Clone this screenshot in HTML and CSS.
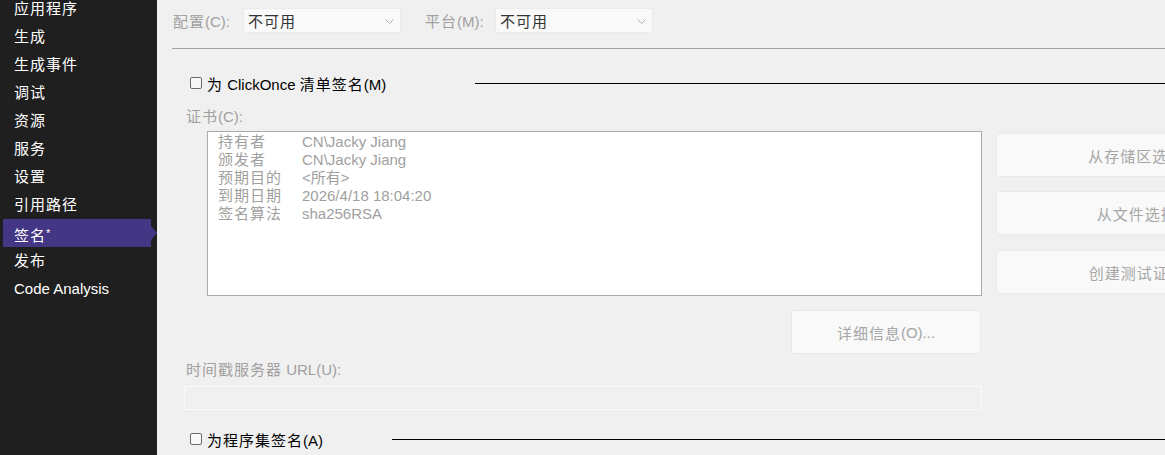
FILE: index.html
```html
<!DOCTYPE html>
<html lang="zh-CN">
<head>
<meta charset="utf-8">
<title>签名</title>
<link rel="stylesheet" href="styles.css">
</head>
<body>
<nav class="sidebar">
  <ul class="nav-list">
    <li class="nav-item zh">应用程序</li>
    <li class="nav-item zh">生成</li>
    <li class="nav-item zh">生成事件</li>
    <li class="nav-item zh">调试</li>
    <li class="nav-item zh">资源</li>
    <li class="nav-item zh">服务</li>
    <li class="nav-item zh">设置</li>
    <li class="nav-item zh">引用路径</li>
    <li class="nav-item zh nav-item-active">签名<span class="star">*</span></li>
    <li class="nav-item zh">发布</li>
    <li class="nav-item">Code Analysis</li>
  </ul>
</nav>
<main class="main">
  <div class="toprow">
    <span class="top-label"><span class="zh">配置</span>(C):</span>
    <div class="select"><span class="zh">不可用</span><svg class="chev" width="9" height="5" viewBox="0 0 9 5"><path d="M0.5 0.5 L4.5 4.5 L8.5 0.5" fill="none" stroke="#b0b0b0" stroke-width="1"/></svg></div>
    <span class="top-label top-label-2"><span class="zh">平台</span>(M):</span>
    <div class="select"><span class="zh">不可用</span><svg class="chev" width="9" height="5" viewBox="0 0 9 5"><path d="M0.5 0.5 L4.5 4.5 L8.5 0.5" fill="none" stroke="#b0b0b0" stroke-width="1"/></svg></div>
  </div>
  <div class="divider"></div>

  <div class="group-head">
    <span class="check"></span>
    <span class="group-title"><span class="zh">为</span> ClickOnce <span class="zh">清单签名</span>(M)</span>
    <span class="group-line group-line-1"></span>
  </div>

  <div class="field-label cert-label"><span class="zh">证书</span>(C):</div>
  <div class="cert-row">
    <div class="cert-col">
      <div class="cert-box">
        <div class="cert-line"><span class="cert-key">持有者</span><span>CN\Jacky Jiang</span></div>
        <div class="cert-line"><span class="cert-key">颁发者</span><span>CN\Jacky Jiang</span></div>
        <div class="cert-line"><span class="cert-key">预期目的</span><span>&lt;所有&gt;</span></div>
        <div class="cert-line"><span class="cert-key">到期日期</span><span>2026/4/18 18:04:20</span></div>
        <div class="cert-line"><span class="cert-key">签名算法</span><span>sha256RSA</span></div>
      </div>
      <div class="details-row">
        <div class="btn btn-details"><span class="zh">详细信息</span>(O)...</div>
      </div>
    </div>
    <div class="btn-col">
      <div class="btn btn-side"><span class="zh">从存储区选择</span>(S)...</div>
      <div class="btn btn-side btn-side-2"><span class="zh">从文件选择</span>(F)...</div>
      <div class="btn btn-side btn-side-3"><span class="zh">创建测试证书</span>(T)...</div>
    </div>
  </div>

  <div class="field-label ts-label"><span class="zh">时间戳服务器</span> URL(U):</div>
  <div class="textbox"></div>

  <div class="group-head group-head-2">
    <span class="check"></span>
    <span class="group-title"><span class="zh">为程序集签名</span>(A)</span>
    <span class="group-line group-line-2"></span>
  </div>
</main>
</body>
</html>
```
FILE: styles.css
```css
* { box-sizing: border-box; }
html, body { margin: 0; padding: 0; }
body {
  width: 1165px;
  height: 455px;
  overflow: hidden;
  display: flex;
  background: #f0f0f0;
  font-family: "Liberation Sans", "Noto Sans CJK SC", sans-serif;
  font-size: 15px;
}

.zh { letter-spacing: 1px; }

.sidebar {
  width: 157px;
  flex: none;
  background: #1f1f1f;
  height: 100%;
}
.nav-list {
  list-style: none;
  margin: -5px 0 0 0;
  padding: 0;
}
.nav-item {
  position: relative;
  height: 28px;
  line-height: 28px;
  margin-right: 6px;
  margin-left: 3px;
  padding-left: 11px;
  color: #ffffff;
  white-space: nowrap;
}
.nav-item-active {
  background: #433684;
}
.nav-item-active::after {
  content: "";
  position: absolute;
  right: -6px;
  top: 7px;
  border-left: 6px solid #433684;
  border-top: 7px solid transparent;
  border-bottom: 7px solid transparent;
}
.star {
  font-size: 11px;
  vertical-align: 4px;
  margin-left: 0;
}

.main {
  flex: 1;
  min-width: 0;
  padding: 8px 0 0 15px;
  overflow: hidden;
}

.toprow {
  display: flex;
  align-items: center;
  height: 25px;
}
.top-label {
  width: 71px;
  padding-left: 1px;
  color: #a0a0a0;
  white-space: nowrap;
}
.top-label-2 {
  margin-left: 23px;
}
.select {
  width: 158px;
  height: 25px;
  background: #f9f9f9;
  border: 1px solid #ebebeb;
  display: flex;
  align-items: center;
  justify-content: space-between;
  padding: 0 6px 0 4px;
  color: #333333;
}
.chev { margin-top: 1px; }

.divider {
  margin-top: 15px;
  height: 1px;
  background: #a3a3a3;
}

.group-head {
  display: flex;
  align-items: center;
  height: 20px;
  margin-top: 24px;
  padding-left: 18px;
  color: #000000;
}
.group-head-2 {
  margin-top: 19px;
}
.check {
  width: 12px;
  height: 12px;
  border: 1px solid #6b6b6b;
  border-radius: 2px;
  background: #f7f7f7;
  flex: none;
}
.group-title {
  margin-left: 5px;
  white-space: nowrap;
}
.group-line {
  flex: 1;
  height: 1px;
  background: #000000;
}
.group-line-1 { margin-left: 89px; }
.group-line-2 { margin-left: 69px; }

.field-label {
  color: #a0a0a0;
  height: 20px;
  line-height: 20px;
  white-space: nowrap;
}
.cert-label {
  margin-top: 14px;
  padding-left: 14px;
}

.cert-row {
  display: flex;
  margin-top: 4px;
  padding-left: 35px;
}
.cert-col {
  width: 775px;
  flex: none;
}
.cert-box {
  height: 165px;
  background: #ffffff;
  border: 1px solid #ababab;
  padding: 1px 0 0 10px;
  color: #a0a0a0;
}
.cert-line {
  height: 18px;
  line-height: 18px;
  display: flex;
  white-space: nowrap;
}
.cert-key {
  width: 84px;
  flex: none;
  letter-spacing: 1px;
}

.btn {
  background: #f9f9f9;
  border: 1px solid #e8e8e8;
  border-radius: 3px;
  color: #a6a6a6;
  display: flex;
  align-items: center;
  justify-content: center;
  height: 44px;
  white-space: nowrap;
}
.details-row {
  display: flex;
  justify-content: flex-end;
  margin-top: 14px;
}
.btn-details {
  width: 190px;
  margin-right: 1px;
}

.btn-col {
  margin-left: 14px;
  margin-top: 2px;
  flex: none;
}
.btn-side {
  width: 313px;
}
.btn-side-2 { margin-top: 14px; }
.btn-side-3 { margin-top: 15px; }

.ts-label {
  margin-top: 6px;
  padding-left: 14px;
}
.textbox {
  margin-top: 6px;
  margin-left: 12px;
  width: 798px;
  height: 24px;
  border: 1px solid #fafafa;
  background: #f0f0f0;
}
```
